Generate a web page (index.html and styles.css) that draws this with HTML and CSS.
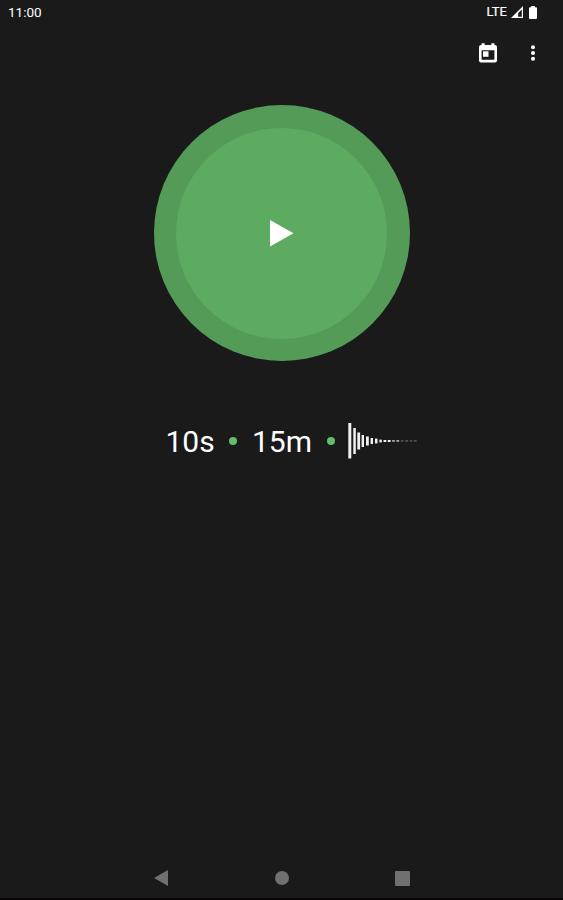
FILE: index.html
```html
<!DOCTYPE html>
<html lang="en">
<head>
<meta charset="utf-8">
<title>Interval timer</title>
<link rel="stylesheet" href="styles.css">
</head>
<body>
<div class="screen">
  <header class="status">
    <span class="clock">11:00</span>
    <div class="signals">
      <span class="network">LTE</span>
      <svg class="signal" width="12" height="12" viewBox="0 0 12 12"><path fill="#fff" fill-rule="evenodd" d="M12 0V12H0ZM10.8 3.4 7.2 7V10.8H10.8Z"/></svg>
      <svg class="battery" width="8" height="13" viewBox="0 0 8 13"><path fill="#fff" d="M2.2 0H5.8V1.3H7Q8 1.3 8 2.3V12Q8 13 7 13H1Q0 13 0 12V2.3Q0 1.3 1 1.3H2.2Z"/></svg>
    </div>
  </header>
  <nav class="toolbar">
    <svg class="calendar" width="18" height="20" viewBox="0 0 18 20"><path fill="#fff" fill-rule="evenodd" d="M2.6 .2H5.6V2H12.4V.2H15.4V2H16Q18 2 18 4V17.5Q18 19.5 16 19.5H2Q0 19.5 0 17.5V4Q0 2 2 2H2.6ZM2.6 7.3V16.7H15.4V7.3Z"/><rect x="4" y="8.3" width="5.5" height="5.5" fill="#fff"/></svg>
    <svg class="more" width="4" height="16" viewBox="0 0 4 16"><g fill="#fff"><circle cx="2" cy="2.2" r="2"/><circle cx="2" cy="8" r="2"/><circle cx="2" cy="13.8" r="2"/></g></svg>
  </nav>
  <main class="content">
    <div class="play">
      <div class="play-inner">
        <svg class="play-icon" width="24" height="27" viewBox="0 0 24 27"><path fill="#fff" d="M0 0 23.5 13.3 0 26.6Z"/></svg>
      </div>
    </div>
    <div class="settings">
      <span class="value warmup">10s</span>
      <span class="dot"></span>
      <span class="value length">15m</span>
      <span class="dot"></span>
      <svg class="wave" width="70" height="36" viewBox="0 0 70 36">
        <g fill="#f0f0f0">
          <rect x="0.3" y="0" width="3" height="35.5"/>
          <rect x="5.3" y="5" width="2.5" height="26"/>
          <rect x="9.3" y="9.5" width="2.8" height="17"/>
          <rect x="13.6" y="12" width="2.4" height="12"/>
          <rect x="18" y="13.5" width="2.8" height="9"/>
          <rect x="22.6" y="15" width="2.4" height="6"/>
          <rect x="27" y="15.6" width="2.5" height="4.8"/>
          <rect x="31.4" y="16.6" width="2.4" height="2.8"/>
          <rect x="35.5" y="17" width="2.8" height="2"/>
          <rect x="39.8" y="17" width="2.8" height="2"/>
        </g>
        <g fill="#b5b5b5">
          <rect x="44.1" y="17.1" width="2.8" height="1.6"/>
          <rect x="48.4" y="17.1" width="2.8" height="1.6"/>
        </g>
        <g fill="#666">
          <rect x="52.8" y="17.3" width="2.8" height="1.2"/>
          <rect x="57.2" y="17.3" width="2.8" height="1.2"/>
          <rect x="61.5" y="17.3" width="2.8" height="1.2"/>
          <rect x="65.8" y="17.3" width="2.8" height="1.2"/>
        </g>
      </svg>
    </div>
  </main>
  <footer class="navbar">
    <svg width="14" height="16" viewBox="0 0 14 16"><path fill="#707070" d="M14 0V16L0 8Z"/></svg>
    <svg width="14" height="14" viewBox="0 0 14 14"><circle cx="7" cy="7" r="7" fill="#707070"/></svg>
    <svg width="15" height="15" viewBox="0 0 15 15"><rect width="15" height="15" rx="1" fill="#707070"/></svg>
  </footer>
</div>
</body>
</html>
```
FILE: styles.css
```css
* { box-sizing: border-box; }
body {
  margin: 0;
  background: #1a1a1a;
  color: #fff;
  font-family: Roboto, sans-serif;
}
svg { display: block; flex: none; }
.screen {
  height: 900px;
  display: flex;
  flex-direction: column;
  overflow: hidden;
  border-bottom: 2px solid #0c0609;
}
.status {
  height: 24px;
  padding: 0 26px 0 8px;
  display: flex;
  justify-content: space-between;
  align-items: center;
  font-size: 13.5px;
}
.signals { display: flex; align-items: center; }
.network { font-size: 13px; line-height: 13px; margin: -1px 0 0; -webkit-text-stroke: .2px #fff; }
.signal { margin-left: 4px; }
.battery { margin-left: 6px; }
.toolbar {
  height: 56px;
  padding: 1px 28px 0 0;
  display: flex;
  justify-content: flex-end;
  align-items: center;
  gap: 34px;
}
.content {
  flex: 1;
  display: flex;
  flex-direction: column;
  align-items: center;
  padding-top: 25px;
}
.play, .play-inner {
  display: flex;
  align-items: center;
  justify-content: center;
  border-radius: 50%;
}
.play { width: 256px; height: 256px; background: #559b58; }
.play-inner { width: 211px; height: 211px; background: #5dab60; }
.settings {
  width: 253px;
  height: 36px;
  margin: 61.5px 0 0 21px;
  display: flex;
  align-items: center;
}
.value { font-size: 30px; line-height: 36px; white-space: nowrap; padding-top: 3px; }
.warmup { width: 63.5px; }
.length { width: 74.5px; margin-left: 15px; }
.dot { width: 8px; height: 8px; flex: none; border-radius: 50%; background: #66bb6a; }
.wave { margin-left: 13.5px; }
.navbar {
  height: 38px;
  padding: 0 153px 2px 154px;
  display: flex;
  align-items: center;
  justify-content: space-between;
}
```
